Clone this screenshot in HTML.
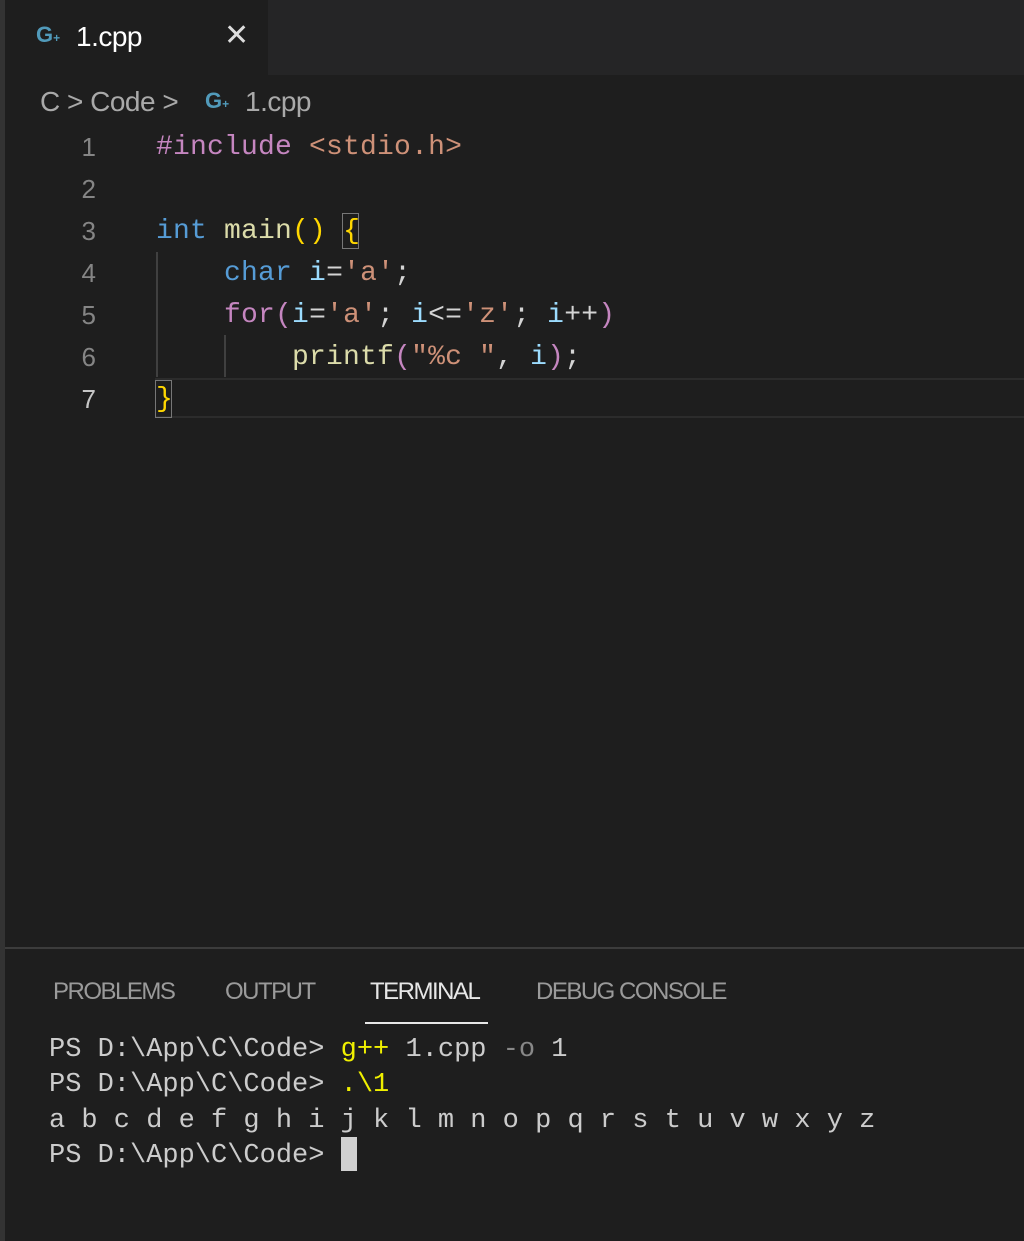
<!DOCTYPE html>
<html><head><meta charset="utf-8"><style>
body{margin:0;width:1024px;height:1241px;background:#1e1e1e;position:relative;overflow:hidden;font-family:"Liberation Sans",sans-serif}
.a{position:absolute;white-space:pre}
.m{font-family:"Liberation Mono",monospace;font-size:28px;letter-spacing:0.2px}
.ln{color:#858585;width:30px;text-align:right;left:66px;font-family:"Liberation Sans",sans-serif;font-size:26px}
.t{font-family:"Liberation Mono",monospace;font-size:27px;color:#cccccc}
.kw{color:#569cd6}.pp{color:#c586c0}.st{color:#ce9178}.fn{color:#dcdcaa}.v{color:#9cdcfe}.y{color:#ffd700}.w{color:#d4d4d4}
.ic{color:#519aba;font-weight:bold}
</style></head><body>
<div class="a" style="left:0;top:0;width:5px;height:1241px;background:#333"></div>
<div class="a" style="left:268px;top:0;width:756px;height:75px;background:#252526"></div>
<div class="a" style="left:5px;top:0;width:263px;height:75px;background:#1e1e1e"></div>
<div class="a ic" style="left:36px;top:22px;font-size:22px">G<span style="font-size:12px">+</span></div>
<div class="a" style="left:76px;top:21px;font-size:28px;color:#fff;letter-spacing:-0.5px">1.cpp</div>
<div class="a" style="left:224px;top:18px;font-size:30px;color:#ddd">✕</div>
<div class="a" style="left:40px;top:86px;font-size:28px;color:#a9a9a9;letter-spacing:-0.5px">C &gt; Code &gt; </div>
<div class="a ic" style="left:205px;top:88px;font-size:22px">G<span style="font-size:12px">+</span></div>
<div class="a" style="left:245px;top:86px;font-size:28px;color:#a9a9a9;letter-spacing:-0.5px">1.cpp</div>

<div class="a ln" style="top:132px">1</div>
<div class="a ln" style="top:174px">2</div>
<div class="a ln" style="top:216px">3</div>
<div class="a ln" style="top:258px">4</div>
<div class="a ln" style="top:300px">5</div>
<div class="a ln" style="top:342px">6</div>
<div class="a ln" style="top:384px;color:#c6c6c6">7</div>

<div class="a" style="left:155px;top:378px;width:869px;height:36px;border-top:2px solid #2c2c2c;border-bottom:2px solid #2c2c2c"></div>
<div class="a" style="left:156px;top:252px;width:2px;height:125px;background:#404040"></div>
<div class="a" style="left:224px;top:335px;width:2px;height:42px;background:#404040"></div>
<div class="a" style="left:342px;top:213px;width:15px;height:34px;border:1px solid #777"></div>
<div class="a" style="left:155px;top:380px;width:15px;height:36px;border:1px solid #777"></div>

<div class="a m" style="left:156px;top:132px"><span class="pp">#include</span> <span class="st">&lt;stdio.h&gt;</span></div>
<div class="a m" style="left:156px;top:216px"><span class="kw">int</span> <span class="fn">main</span><span class="y">()</span> <span class="y">{</span></div>
<div class="a m" style="left:156px;top:258px">    <span class="kw">char</span> <span class="v">i</span><span class="w">=</span><span class="st">'a'</span><span class="w">;</span></div>
<div class="a m" style="left:156px;top:300px">    <span class="pp">for</span><span class="pp">(</span><span class="v">i</span><span class="w">=</span><span class="st">'a'</span><span class="w">; </span><span class="v">i</span><span class="w">&lt;=</span><span class="st">'z'</span><span class="w">; </span><span class="v">i</span><span class="w">++</span><span class="pp">)</span></div>
<div class="a m" style="left:156px;top:342px">        <span class="fn">printf</span><span class="pp">(</span><span class="st">"%c "</span><span class="w">, </span><span class="v">i</span><span class="pp">)</span><span class="w">;</span></div>
<div class="a m" style="left:156px;top:384px"><span class="y">}</span></div>

<div class="a" style="left:5px;top:947px;width:1019px;height:2px;background:#3c3c3c"></div>
<div class="a" style="left:53px;top:978px;font-size:24px;color:#9a9a9a;letter-spacing:-1.5px">PROBLEMS</div>
<div class="a" style="left:225px;top:978px;font-size:24px;color:#9a9a9a;letter-spacing:-1.5px">OUTPUT</div>
<div class="a" style="left:370px;top:978px;font-size:24px;color:#e7e7e7;letter-spacing:-1.5px">TERMINAL</div>
<div class="a" style="left:365px;top:1022px;width:123px;height:2px;background:#e7e7e7"></div>
<div class="a" style="left:536px;top:978px;font-size:24px;color:#9a9a9a;letter-spacing:-1.5px">DEBUG CONSOLE</div>

<div class="a t" style="left:49px;top:1035px">PS D:\App\C\Code&gt; <span style="color:#f0f000">g++</span> 1.cpp <span style="color:#888">-o</span> 1</div>
<div class="a t" style="left:49px;top:1070px">PS D:\App\C\Code&gt; <span style="color:#f0f000">.\1</span></div>
<div class="a t" style="left:49px;top:1106px;letter-spacing:0px">a b c d e f g h i j k l m n o p q r s t u v w x y z</div>
<div class="a t" style="left:49px;top:1141px">PS D:\App\C\Code&gt; </div>
<div class="a" style="left:341px;top:1137px;width:16px;height:34px;background:#d0d0d0"></div>
</body></html>
